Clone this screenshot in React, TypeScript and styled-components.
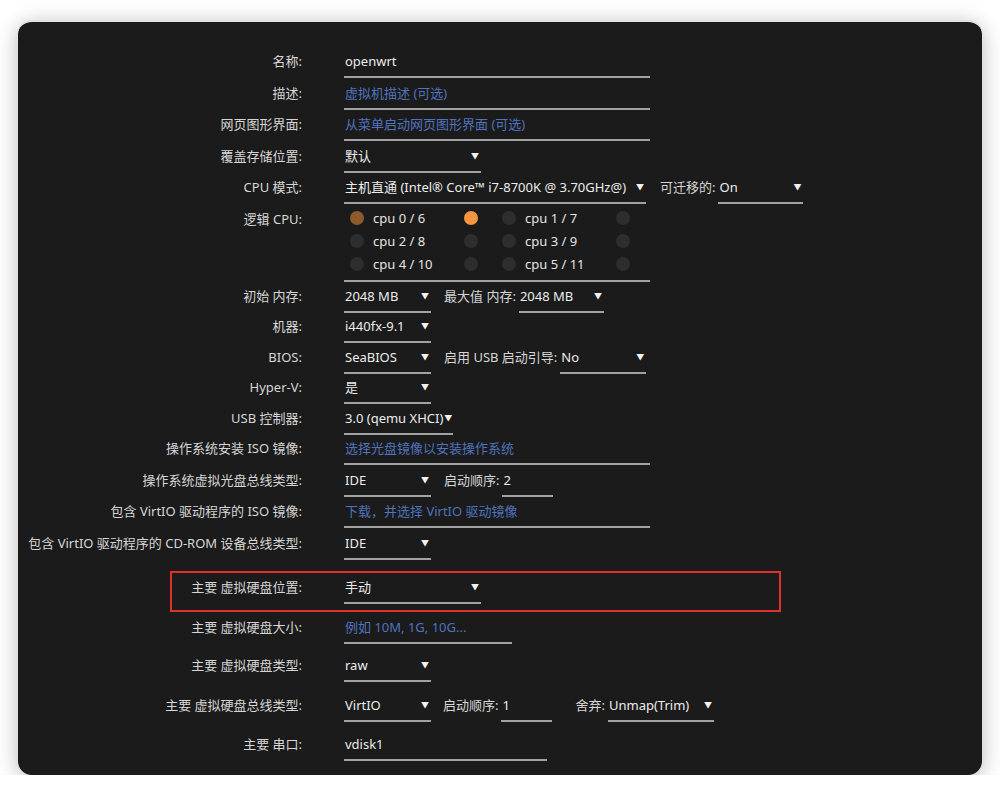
import React from "react";
import styled, { createGlobalStyle } from "styled-components";

const GlobalStyle = createGlobalStyle`
  html, body { margin: 0; padding: 0; background: #ffffff; }
  body {
    font-family: "Noto Sans", "Noto Sans CJK SC", sans-serif;
    font-size: 13px;
    -webkit-font-smoothing: antialiased;
  }
`;

const Window = styled.div`
  margin: 20px 0 0 18px;
  width: 964px;
  height: 755px;
  box-sizing: border-box;
  background: #1b1b1b;
  border-top: 2px solid #e2e2e2;
  border-radius: 14px;
  box-shadow: 0 4px 22px rgba(0, 0, 0, 0.28);
  padding-top: 25px;
  overflow: hidden;
`;

const Row = styled.div<{ $h?: number; $mt?: number }>`
  display: flex;
  align-items: flex-start;
  height: ${(p) => p.$h ?? 31}px;
  margin-top: ${(p) => p.$mt ?? 0}px;
`;

const Label = styled.div<{ $w?: number }>`
  width: ${(p) => p.$w ?? 284}px;
  flex-shrink: 0;
  margin-right: 42px;
  padding-top: 4px;
  line-height: 20px;
  text-align: right;
  color: #d6d6d6;
  white-space: nowrap;
`;

const InlineLabel = styled.div<{ $ml: number }>`
  margin-left: ${(p) => p.$ml}px;
  margin-right: 3px;
  padding-top: 4px;
  line-height: 20px;
  color: #d6d6d6;
  white-space: nowrap;
`;

const Field = styled.div<{ $w: number; $ph?: boolean }>`
  width: ${(p) => p.$w}px;
  flex-shrink: 0;
  box-sizing: border-box;
  height: 31px;
  padding: 4px 2px 5px 1px;
  line-height: 20px;
  border-bottom: 2px solid #a2a2a2;
  color: ${(p) => (p.$ph ? "#5073bd" : "#ececec")};
  white-space: nowrap;
  overflow: hidden;
  display: flex;
  align-items: center;
  justify-content: space-between;
`;

const Arrow = styled.span`
  font-size: 8px;
  color: #f2f2f2;
  margin-left: 1px;
  flex-shrink: 0;
`;

const CpuGrid = styled.div`
  width: 306px;
  box-sizing: border-box;
  padding: 2px 0 4px 6px;
  border-bottom: 2px solid #a2a2a2;
  display: grid;
  grid-template-columns: max-content max-content;
  grid-auto-rows: 23px;
  column-gap: 24px;
`;

const CpuPair = styled.div`
  display: flex;
  align-items: center;
`;

const Dot = styled.span<{ $c: string }>`
  width: 14px;
  height: 14px;
  border-radius: 50%;
  background: ${(p) => p.$c};
  flex-shrink: 0;
`;

const CpuName = styled.span`
  width: 100px;
  box-sizing: border-box;
  padding-left: 9px;
  color: #e4e4e4;
  white-space: nowrap;
`;

const Highlight = styled.div`
  margin: 11px 0 0 152px;
  width: 611px;
  height: 41px;
  box-sizing: border-box;
  border: 2px solid #e0302a;
`;

const Select = ({ w, children }: { w: number; children: React.ReactNode }) => (
  <Field $w={w}>
    <span>{children}</span>
    <Arrow>▼</Arrow>
  </Field>
);

const cpus = [
  { name: "cpu 0 / 6", a: "#8d5a2c", b: "#f3963f" },
  { name: "cpu 1 / 7", a: "#2e2e2e", b: "#2e2e2e" },
  { name: "cpu 2 / 8", a: "#2e2e2e", b: "#2e2e2e" },
  { name: "cpu 3 / 9", a: "#2e2e2e", b: "#2e2e2e" },
  { name: "cpu 4 / 10", a: "#2e2e2e", b: "#2e2e2e" },
  { name: "cpu 5 / 11", a: "#2e2e2e", b: "#2e2e2e" },
];

export default function App() {
  return (
    <>
      <GlobalStyle />
      <Window>
        <Row $h={31.5}>
          <Label>名称:</Label>
          <Field $w={306}>openwrt</Field>
        </Row>
        <Row $h={31.5}>
          <Label>描述:</Label>
          <Field $w={306} $ph>虚拟机描述 (可选)</Field>
        </Row>
        <Row $h={31.5}>
          <Label>网页图形界面:</Label>
          <Field $w={306} $ph>从菜单启动网页图形界面 (可选)</Field>
        </Row>
        <Row $h={31.5}>
          <Label>覆盖存储位置:</Label>
          <Select w={137}>默认</Select>
        </Row>
        <Row $h={31.5}>
          <Label>CPU 模式:</Label>
          <Select w={302}>主机直通 (Intel® Core™ i7-8700K @ 3.70GHz@)</Select>
          <InlineLabel $ml={14}>可迁移的:</InlineLabel>
          <Select w={85}>On</Select>
        </Row>
        <Row $h={77}>
          <Label>逻辑 CPU:</Label>
          <CpuGrid>
            {cpus.map((c) => (
              <CpuPair key={c.name}>
                <Dot $c={c.a} />
                <CpuName>{c.name}</CpuName>
                <Dot $c={c.b} />
              </CpuPair>
            ))}
          </CpuGrid>
        </Row>
        <Row $h={30.5}>
          <Label>初始 内存:</Label>
          <Select w={87}>2048 MB</Select>
          <InlineLabel $ml={13}>最大值 内存:</InlineLabel>
          <Select w={85}>2048 MB</Select>
        </Row>
        <Row $h={30.5}>
          <Label>机器:</Label>
          <Select w={87}>i440fx-9.1</Select>
        </Row>
        <Row $h={30.5}>
          <Label>BIOS:</Label>
          <Select w={87}>SeaBIOS</Select>
          <InlineLabel $ml={13}>启用 USB 启动引导:</InlineLabel>
          <Select w={86}>No</Select>
        </Row>
        <Row $h={30.5}>
          <Label>Hyper-V:</Label>
          <Select w={87}>是</Select>
        </Row>
        <Row $h={30.5}>
          <Label>USB 控制器:</Label>
          <Select w={109}>3.0 (qemu XHCI)</Select>
        </Row>
        <Row $h={31.5}>
          <Label>操作系统安装 ISO 镜像:</Label>
          <Field $w={306} $ph>选择光盘镜像以安装操作系统</Field>
        </Row>
        <Row $h={31.5}>
          <Label>操作系统虚拟光盘总线类型:</Label>
          <Select w={87}>IDE</Select>
          <InlineLabel $ml={13}>启动顺序:</InlineLabel>
          <Field $w={51}>2</Field>
        </Row>
        <Row $h={31.5}>
          <Label>包含 VirtIO 驱动程序的 ISO 镜像:</Label>
          <Field $w={306} $ph>下载，并选择 VirtIO 驱动镜像</Field>
        </Row>
        <Row>
          <Label>包含 VirtIO 驱动程序的 CD-ROM 设备总线类型:</Label>
          <Select w={87}>IDE</Select>
        </Row>
        <Highlight>
          <Row>
            <Label $w={130}>主要 虚拟硬盘位置:</Label>
            <Select w={137}>手动</Select>
          </Row>
        </Highlight>
        <Row $h={38} $mt={1}>
          <Label>主要 虚拟硬盘大小:</Label>
          <Field $w={168} $ph>例如 10M, 1G, 10G...</Field>
        </Row>
        <Row $h={40}>
          <Label>主要 虚拟硬盘类型:</Label>
          <Select w={87}>raw</Select>
        </Row>
        <Row $h={39}>
          <Label>主要 虚拟硬盘总线类型:</Label>
          <Select w={87}>VirtIO</Select>
          <InlineLabel $ml={12}>启动顺序:</InlineLabel>
          <Field $w={51}>1</Field>
          <InlineLabel $ml={23}>舍弃:</InlineLabel>
          <Select w={106}>Unmap(Trim)</Select>
        </Row>
        <Row $h={39}>
          <Label>主要 串口:</Label>
          <Field $w={203}>vdisk1</Field>
        </Row>
      </Window>
    </>
  );
}
